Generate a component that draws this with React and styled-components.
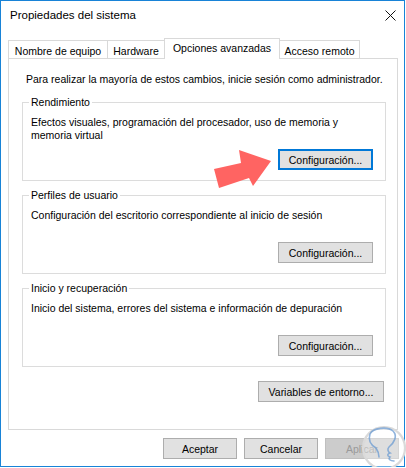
import React from "react";
import styled, { createGlobalStyle } from "styled-components";

const GlobalStyle = createGlobalStyle`
  body {
    margin: 0;
    background: #fff;
    font-family: "Liberation Sans", Arial, sans-serif;
    font-size: 10.5px;
    color: #000;
  }
`;

const Window = styled.div`
  position: relative;
  width: 405px;
  height: 467px;
  box-sizing: border-box;
  border: 1px solid #1883d7;
  background: #fff;
  display: flex;
  flex-direction: column;
`;

const TitleBar = styled.div`
  height: 28px;
  display: flex;
  align-items: center;
  justify-content: space-between;
  padding: 0 8px 0 9px;
`;

const Title = styled.span`
  font-size: 11.5px;
`;

const CloseIcon = styled.svg`
  width: 11px;
  height: 11px;
  display: block;
`;

const TabRow = styled.div`
  display: flex;
  align-items: flex-end;
  height: 21px;
  margin: 9px 0 0 7px;
  position: relative;
  z-index: 1;
`;

const Tab = styled.div`
  box-sizing: border-box;
  width: ${p => p.width}px;
  height: ${p => (p.active ? 21 : 18)}px;
  margin: 0 -1px ${p => (p.active ? 0 : 1)}px 0;
  border: 1px solid #d9d9d9;
  border-bottom: none;
  background: #fff;
  display: flex;
  align-items: center;
  justify-content: center;
  padding: ${p => (p.active ? "0 0 2px" : "2px 0 0")};
  position: relative;
  z-index: ${p => (p.active ? 2 : 1)};
  white-space: nowrap;
`;

const Panel = styled.div`
  box-sizing: border-box;
  width: 390px;
  margin: -1px 0 0 7px;
  border: 1px solid #d9d9d9;
  padding: 14px 0 27px;
  display: flex;
  flex-direction: column;
`;

const Intro = styled.p`
  margin: 0 0 10px 17px;
  line-height: 13px;
`;

const Group = styled.fieldset`
  margin: 0 11px ${p => (p.last ? 0 : 8)}px 13px;
  padding: 7px 12px 10px 8px;
  border: 1px solid #dcdcdc;
  min-inline-size: 0;
  display: flex;
  flex-direction: column;
`;

const Legend = styled.legend`
  padding: 0 2px;
  margin-left: -2px;
  line-height: 13px;
`;

const Description = styled.div`
  line-height: 13px;
  min-height: 26px;
`;

const Button = styled.button`
  box-sizing: border-box;
  width: ${p => p.width}px;
  height: 21px;
  padding: 0;
  font: inherit;
  color: ${p => (p.disabled ? "#9a9a9a" : "#000")};
  background: ${p => (p.disabled ? "#cccccc" : "#e1e1e1")};
  border: 1px solid ${p => (p.focused ? "#0078d7" : p.disabled ? "#bfbfbf" : "#adadad")};
  box-shadow: ${p => (p.focused ? "inset 0 0 0 1px #0078d7" : "none")};
  align-self: flex-end;
  margin-top: ${p => p.offset || 0}px;
  margin-right: ${p => p.inset || 0}px;
  white-space: nowrap;
`;

const Footer = styled.div`
  display: flex;
  justify-content: flex-end;
  gap: 7px;
  margin-top: 8px;
  padding-right: 5px;
`;

const Arrow = styled.svg`
  position: absolute;
  left: 210px;
  top: 146px;
  width: 64px;
  height: 44px;
`;

const Watermark = styled.svg`
  position: absolute;
  left: 360px;
  top: 424px;
  width: 46px;
  height: 46px;
`;

const tabs = [
  { label: "Nombre de equipo", width: 100 },
  { label: "Hardware", width: 58 },
  { label: "Opciones avanzadas", width: 116, active: true },
  { label: "Acceso remoto", width: 81 }
];

const groups = [
  {
    title: "Rendimiento",
    text: (
      <>
        Efectos visuales, programación del procesador, uso de memoria y
        <br />
        memoria virtual
      </>
    ),
    focused: true
  },
  {
    title: "Perfiles de usuario",
    text: "Configuración del escritorio correspondiente al inicio de sesión"
  },
  {
    title: "Inicio y recuperación",
    text: "Inicio del sistema, errores del sistema e información de depuración"
  }
];

export default function App() {
  return (
    <>
      <GlobalStyle />
      <Window>
        <TitleBar>
          <Title>Propiedades del sistema</Title>
          <CloseIcon viewBox="0 0 11 11">
            <path d="M0.5 0.5 L10.5 10.5 M10.5 0.5 L0.5 10.5" stroke="#111" strokeWidth="1" />
          </CloseIcon>
        </TitleBar>

        <TabRow>
          {tabs.map(tab => (
            <Tab key={tab.label} width={tab.width} active={tab.active}>
              {tab.label}
            </Tab>
          ))}
        </TabRow>

        <Panel>
          <Intro>
            Para realizar la mayoría de estos cambios, inicie sesión como
            administrador.
          </Intro>
          {groups.map((group, i) => (
            <Group key={group.title} last={i === groups.length - 1}>
              <Legend>{group.title}</Legend>
              <Description>{group.text}</Description>
              <Button width={95} offset={7} focused={group.focused}>
                Configuración...
              </Button>
            </Group>
          ))}
          <Button width={126} offset={14} inset={13}>
            Variables de entorno...
          </Button>
        </Panel>

        <Footer>
          <Button width={74}>Aceptar</Button>
          <Button width={74}>Cancelar</Button>
          <Button width={74} disabled>
            Aplicar
          </Button>
        </Footer>

        <Arrow viewBox="0 0 64 44">
          <polygon
            points="8,41 3,22 30,16 28,3 60,14 42,39 38,31"
            fill="#ff6462"
          />
        </Arrow>

        <Watermark viewBox="0 0 46 46">
          <circle cx="23" cy="23" r="21" fill="rgba(255,255,255,0.35)" stroke="#dadada" strokeWidth="2.2" />
          <path
            d="M9 9 C12 3 26 1 32 6 C37 11 33 18 28 22 C26 24 27 27 29 28 C26 29 26 31 29 32 C27 34 29 36 33 36 M9 9 C7 15 10 20 15 23 C17 26 18 29 18 32"
            fill="none"
            stroke="#6b9bd1"
            strokeWidth="1.6"
            strokeLinecap="round"
            opacity="0.75"
          />
        </Watermark>
      </Window>
    </>
  );
}
